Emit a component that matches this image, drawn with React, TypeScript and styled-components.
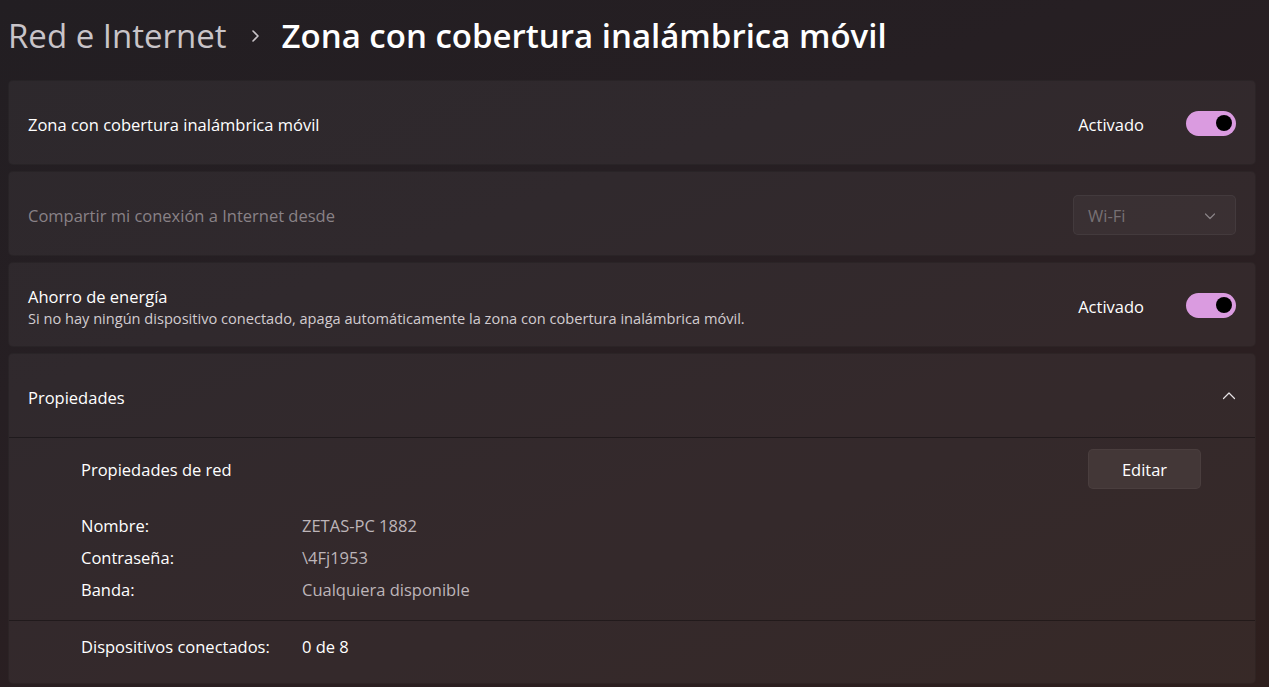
import React from "react";
import styled, { createGlobalStyle } from "styled-components";

const GlobalStyle = createGlobalStyle`
  html, body {
    margin: 0;
    padding: 0;
    background: #231e21;
  }
  * {
    box-sizing: border-box;
  }
`;

const FONT = `"Open Sans", "Noto Sans", "Liberation Sans", sans-serif`;

const Page = styled.div`
  min-height: 687px;
  width: 1269px;
  padding: 0 13px 4px 8px;
  font-family: ${FONT};
  color: #ffffff;
  background: linear-gradient(160deg, #221e22 0%, #261f23 35%, #2b1f21 70%, #2e1f1d 100%);
  overflow: hidden;
`;

const Header = styled.header`
  height: 80px;
  display: flex;
  align-items: center;
  padding-bottom: 9px;
  font-size: 33px;
  font-weight: 600;
  white-space: nowrap;
`;

const Crumb = styled.span`
  color: #c9c4c8;
  font-weight: 400;
`;

const CrumbSep = styled.span`
  display: inline-flex;
  align-items: center;
  margin: 0 22px 0 23px;
`;

const Current = styled.span`
  color: #ffffff;
`;

const List = styled.div`
  display: flex;
  flex-direction: column;
  gap: 6px;
`;

const Card = styled.div`
  background: rgba(255, 255, 255, 0.048);
  border: 1px solid rgba(0, 0, 0, 0.12);
  border-radius: 5px;
  overflow: hidden;
`;

const Row = styled.div`
  height: 83px;
  display: flex;
  align-items: center;
  justify-content: space-between;
  padding: 0 19px;
`;

const TextCol = styled.div`
  display: flex;
  flex-direction: column;
  margin-top: 4px;
`;

const Label = styled.div<{ $dim?: boolean; $shift?: boolean }>`
  font-size: 16.5px;
  margin-top: ${({ $shift }) => ($shift ? 4 : 0)}px;
  color: ${({ $dim }) => ($dim ? "#898287" : "#ffffff")};
`;

const Sub = styled.div`
  font-size: 14.6px;
  color: #d2ccd0;
`;

const Right = styled.div`
  display: flex;
  align-items: center;
  gap: 42px;
`;

const State = styled.span`
  font-size: 16.5px;
  margin-top: 3px;
`;

const Toggle = styled.div`
  width: 50px;
  height: 25px;
  border-radius: 13px;
  background: #da9be0;
  display: flex;
  align-items: center;
  justify-content: flex-end;
  padding-right: 4px;
  margin-top: 1px;
`;

const Knob = styled.div`
  width: 16px;
  height: 16px;
  border-radius: 50%;
  background: #000000;
`;

const Select = styled.div`
  width: 163px;
  height: 40px;
  margin-top: 2px;
  border-radius: 5px;
  background: rgba(255, 255, 255, 0.035);
  border: 1px solid rgba(255, 255, 255, 0.05);
  display: flex;
  align-items: center;
  justify-content: space-between;
  padding: 2px 18px 0 14px;
  font-size: 16.5px;
  color: #777074;
`;

const Divider = styled.div`
  height: 1px;
  background: rgba(0, 0, 0, 0.35);
`;

const Section = styled.div<{ $pt: number; $pb: number }>`
  padding: ${({ $pt, $pb }) => `${$pt}px 54px ${$pb}px 72px`};
`;

const SectionHead = styled.div`
  display: flex;
  align-items: center;
  justify-content: space-between;
  height: 40px;
  font-size: 16.5px;
`;

const Button = styled.button`
  width: 113px;
  height: 40px;
  border-radius: 5px;
  border: 1px solid rgba(255, 255, 255, 0.04);
  background: #433737;
  color: #ffffff;
  font-family: ${FONT};
  font-size: 16.5px;
`;

const Props = styled.div<{ $mt?: number }>`
  display: grid;
  grid-template-columns: 221px 1fr;
  grid-auto-rows: 32px;
  align-items: center;
  margin-top: ${({ $mt }) => $mt || 0}px;
  font-size: 16.5px;
`;

const Value = styled.span<{ $muted?: boolean }>`
  color: ${({ $muted }) => ($muted ? "#bdb5b9" : "#ffffff")};
`;

const Chevron = ({ up }: { up?: boolean }) => (
  <svg width="14" height="14" viewBox="0 0 14 14" fill="none">
    <path
      d={up ? "M1.5 9.5 L7 4 L12.5 9.5" : "M2.5 5 L7 9.5 L11.5 5"}
      stroke={up ? "#e8e4e6" : "#8a8387"}
      strokeWidth="1.2"
      strokeLinecap="round"
      strokeLinejoin="round"
    />
  </svg>
);

const CrumbArrow = () => (
  <svg width="10" height="14" viewBox="0 0 10 14" fill="none">
    <path d="M3 2 L8 7 L3 12" stroke="#c9c4c8" strokeWidth="1.6" strokeLinecap="round" strokeLinejoin="round" />
  </svg>
);

const ToggleSwitch = () => (
  <Toggle>
    <Knob />
  </Toggle>
);

export default function App() {
  return (
    <>
      <GlobalStyle />
      <Page>
        <Header>
          <Crumb>Red e Internet</Crumb>
          <CrumbSep>
            <CrumbArrow />
          </CrumbSep>
          <Current>Zona con cobertura inalámbrica móvil</Current>
        </Header>

        <List>
          <Card>
            <Row>
              <Label $shift>Zona con cobertura inalámbrica móvil</Label>
              <Right>
                <State>Activado</State>
                <ToggleSwitch />
              </Right>
            </Row>
          </Card>

          <Card>
            <Row>
              <Label $dim $shift>Compartir mi conexión a Internet desde</Label>
              <Select>
                <span>Wi-Fi</span>
                <Chevron />
              </Select>
            </Row>
          </Card>

          <Card>
            <Row>
              <TextCol>
                <Label>Ahorro de energía</Label>
                <Sub>
                  Si no hay ningún dispositivo conectado, apaga automáticamente la zona con cobertura inalámbrica móvil.
                </Sub>
              </TextCol>
              <Right>
                <State>Activado</State>
                <ToggleSwitch />
              </Right>
            </Row>
          </Card>

          <Card>
            <Row>
              <Label $shift>Propiedades</Label>
              <Chevron up />
            </Row>
            <Divider />
            <Section $pt={11} $pb={15}>
              <SectionHead>
                <span>Propiedades de red</span>
                <Button>Editar</Button>
              </SectionHead>
              <Props $mt={20}>
                <span>Nombre:</span>
                <Value $muted>ZETAS-PC 1882</Value>
                <span>Contraseña:</span>
                <Value $muted>\4Fj1953</Value>
                <span>Banda:</span>
                <Value $muted>Cualquiera disponible</Value>
              </Props>
            </Section>
            <Divider />
            <Section $pt={9} $pb={21}>
              <Props>
                <span>Dispositivos conectados:</span>
                <Value>0 de 8</Value>
              </Props>
            </Section>
          </Card>
        </List>
      </Page>
    </>
  );
}
